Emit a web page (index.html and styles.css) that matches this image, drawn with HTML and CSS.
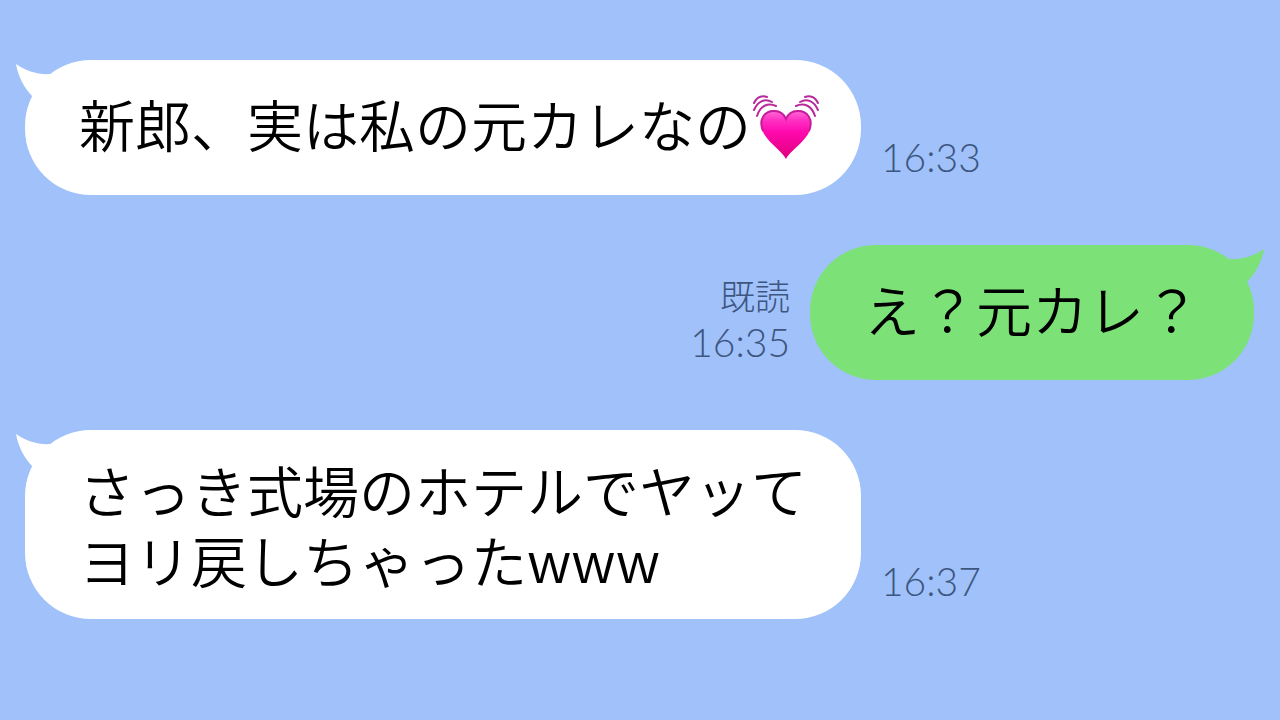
FILE: index.html
```html
<!DOCTYPE html>
<html lang="ja">
<head>
<meta charset="utf-8">
<title>トーク</title>
<link rel="stylesheet" href="styles.css">
</head>
<body>
<main class="chat">
  <article class="message">
    <div class="bubble">
      <svg class="tail" viewBox="0 0 40 40" aria-hidden="true"><path d="M0 0C10 7 22 11 35 10L38 30L17 33C8 24 2 12 0 0Z"/></svg>
      <p class="text">新郎、実は私の元カレなの<svg class="heart" viewBox="0 0 66 66" role="img" aria-label="ときめくハート">
        <defs>
          <linearGradient id="fill" x1="0" y1="0" x2="0" y2="1">
            <stop offset="0" stop-color="#ff70d8"/>
            <stop offset="0.2" stop-color="#ff32c4"/>
            <stop offset="0.45" stop-color="#ff08ae"/>
            <stop offset="1" stop-color="#e0007c"/>
          </linearGradient>
        </defs>
        <path d="M33 64C28 54 8 44 8 29C8 21 13 15 21 15C27 15 31 18 33 23C35 18 39 15 45 15C53 15 58 21 58 29C58 44 38 54 33 64Z" fill="url(#fill)"/>
        <path d="M10 36C5 24 12 16 21 16C27 16 31 19 33 24C35 19 39 16 45 16C54 16 61 24 56 36" fill="none" stroke="#c41d9c" stroke-width="2"/>
        <g fill="none" stroke="#b92a9c" stroke-width="2" stroke-linecap="round">
          <path d="M1 8C4 2 9 0 14 2M1 15C5 6 12 3 19 7M4 21C7 11 15 7 23 11"/>
          <path d="M65 8C62 2 57 0 52 2M65 15C61 6 54 3 47 7M62 21C59 11 51 7 43 11"/>
        </g>
      </svg></p>
    </div>
    <div class="meta"><time>16:33</time></div>
  </article>

  <article class="message sent">
    <div class="bubble">
      <svg class="tail" viewBox="0 0 40 40" aria-hidden="true"><path d="M0 0C10 7 22 11 35 10L38 30L17 33C8 24 2 12 0 0Z"/></svg>
      <p class="text">え？元カレ？</p>
    </div>
    <div class="meta"><span class="read">既読</span><time>16:35</time></div>
  </article>

  <article class="message">
    <div class="bubble multiline">
      <svg class="tail" viewBox="0 0 40 40" aria-hidden="true"><path d="M0 0C10 7 22 11 35 10L38 30L17 33C8 24 2 12 0 0Z"/></svg>
      <p class="text">さっき式場のホテルでヤッて<br>ヨリ戻しちゃったwww</p>
    </div>
    <div class="meta"><time>16:37</time></div>
  </article>
</main>
</body>
</html>
```
FILE: styles.css
```css
* {
  box-sizing: border-box;
}

body {
  margin: 0;
  min-height: 100vh;
  background: #a0c1fa;
  color: #000;
  font-family: "Noto Sans CJK JP", sans-serif;
}

.chat {
  display: flex;
  flex-direction: column;
  gap: 50px;
  padding: 60px 26px 60px 25px;
}

.message {
  display: flex;
  align-items: flex-end;
  gap: 20px;
}

.sent {
  flex-direction: row-reverse;
}

.bubble {
  position: relative;
  padding: 28px 54px 37px;
  border-radius: 66px;
  background: #fff;
}

.multiline {
  padding: 24px 54px 25px;
}

.sent .bubble {
  background: #7ce278;
}

.tail {
  position: absolute;
  top: 4px;
  left: -9px;
  width: 40px;
  height: 40px;
  fill: #fff;
}

.sent .tail {
  left: auto;
  right: -10px;
  transform: scaleX(-1);
  fill: #7ce278;
}

.text {
  margin: 0;
  font-size: 56px;
  font-weight: 350;
  line-height: 70px;
}

.heart {
  width: 66px;
  height: 66px;
  margin: -14px -12px -6px 2px;
  vertical-align: middle;
  overflow: visible;
}

.meta {
  display: flex;
  flex-direction: column;
  padding-bottom: 15px;
  color: #3d5680;
  font-family: Lato, "Noto Sans CJK JP", sans-serif;
  font-size: 39px;
  font-weight: 300;
  line-height: 46px;
}

.sent .meta {
  align-items: flex-end;
}

.read {
  font-size: 35px;
}
```
